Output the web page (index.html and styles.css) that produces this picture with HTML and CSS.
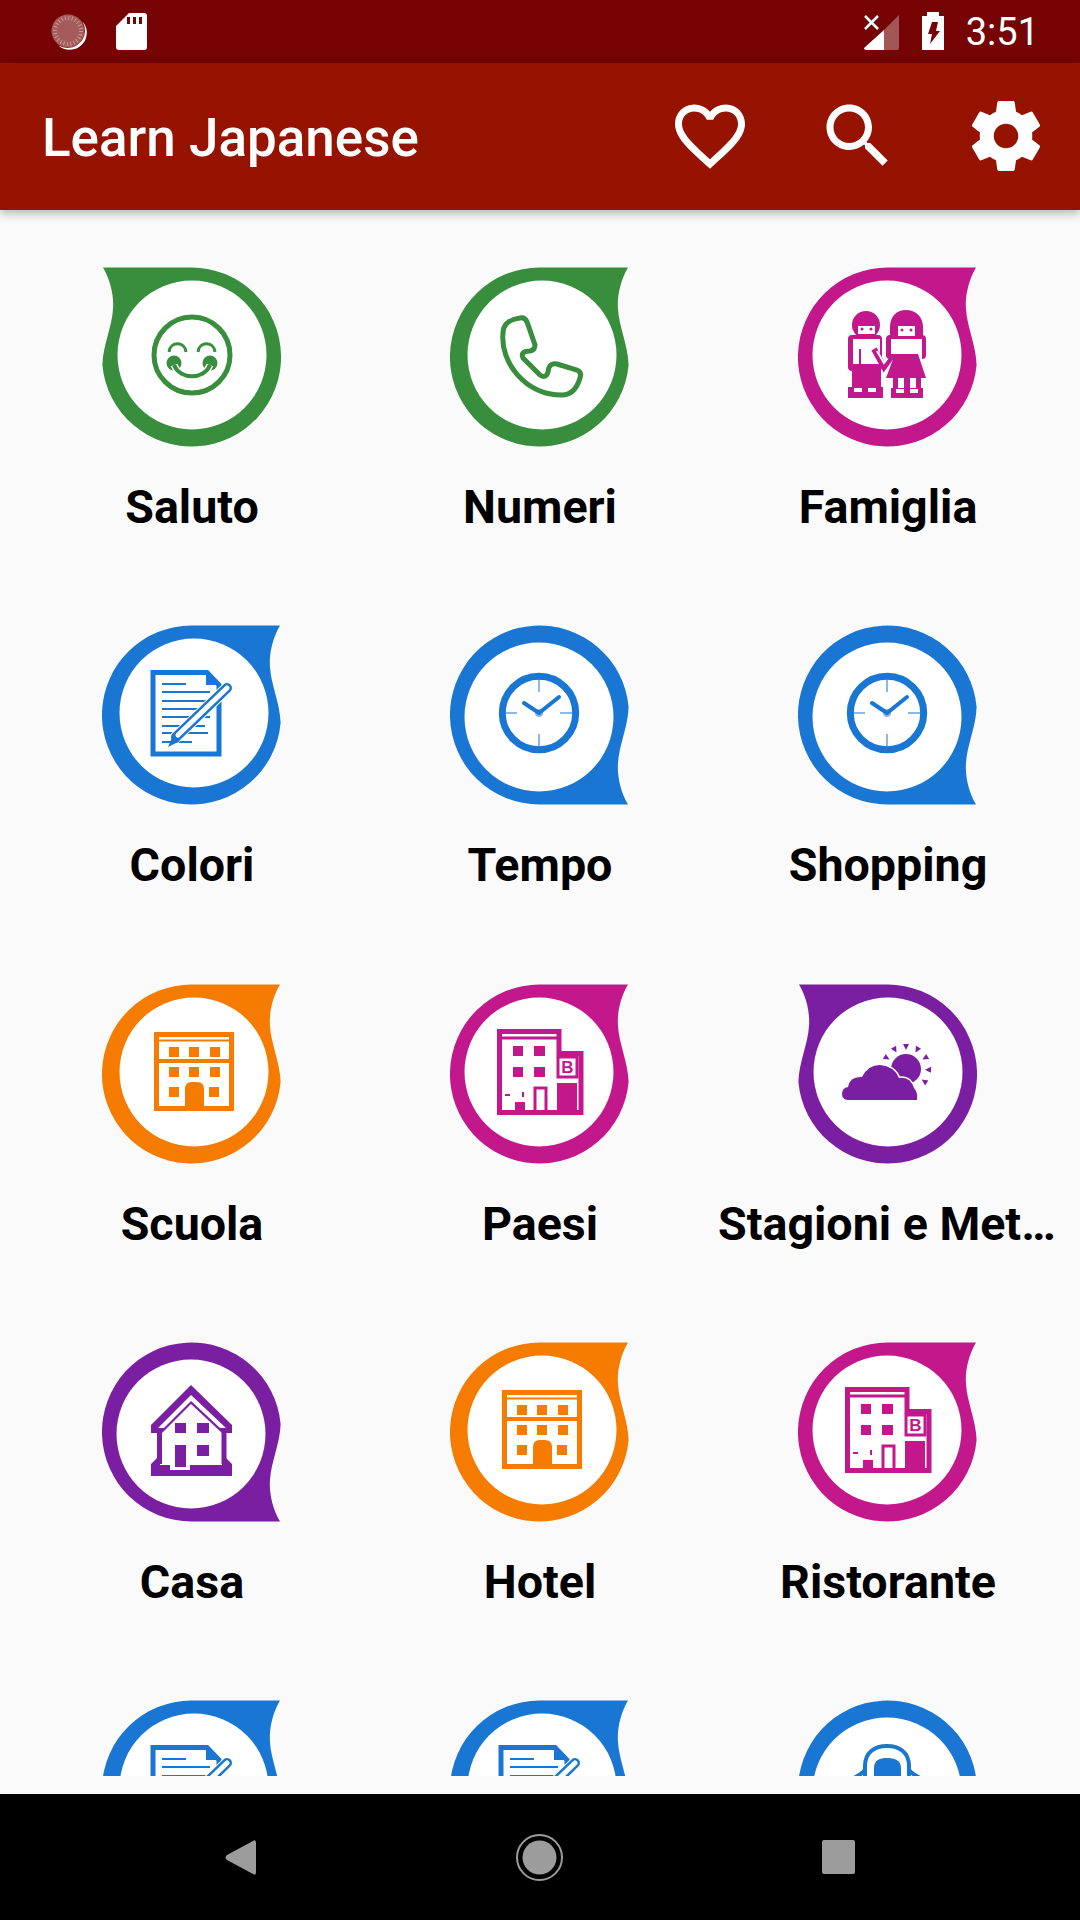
FILE: index.html
```html
<!DOCTYPE html>
<html lang="it">
<head>
  <meta charset="UTF-8">
  <meta name="viewport" content="width=device-width, initial-scale=1.0">
  <title>Learn Japanese</title>
  <link rel="stylesheet" href="styles.css">
</head>
<body>
  <!-- shared shapes, coordinates are px inside the 180px tile -->
  <svg class="sprites" aria-hidden="true">
    <symbol id="drop" viewBox="0 0 180 180">
      <path class="solid" d="M178 0.500C170 14 167 30 168 42C169 60 178 78 178.600 98A89.500 89.500 0 1 1 89.500 0.500Z"/>
      <circle class="paper" cx="89" cy="88" r="74.500"/>
    </symbol>
    <!-- some badges have the white disc sitting a bit to the right -->
    <symbol id="drop-shifted" viewBox="0 0 180 180">
      <path class="solid" d="M178 0.500C170 14 167 30 168 42C169 60 178 78 178.600 98A89.500 89.500 0 1 1 89.500 0.500Z"/>
      <circle class="paper" cx="92" cy="88" r="74.500"/>
    </symbol>

    <symbol id="smile" viewBox="0 0 180 180">
      <circle class="line w5" cx="90" cy="88" r="38"/>
      <path class="line w3" d="M67 85C68 74 83 74 84 85M96 85C97 74 112 74 113 85"/>
      <circle class="solid" cx="72" cy="96" r="7.500"/>
      <circle class="solid" cx="108" cy="96" r="7.500"/>
      <path class="cut w7" d="M72 98C78 113 102 113 108 98"/>
      <path class="line w4" d="M72 98C78 113 102 113 108 98"/>
    </symbol>

    <symbol id="phone" viewBox="0 0 180 180">
      <path class="line w5" d="M53 66C53 56 62 52 70 51Q75 50 77 55L85 78Q85 83 80 84Q70 84 73 91L90 108Q96 112 98 105Q99 95 107 97L127 103Q132 105 130 111Q125 128 112 128C75 128 50 95 53 66Z"/>
    </symbol>

    <symbol id="family" viewBox="0 0 180 180">
      <circle class="solid" cx="68" cy="58" r="14"/>
      <rect class="paper" x="60" y="59" width="17" height="8"/>
      <circle class="solid" cx="64" cy="62" r="1.500"/>
      <circle class="solid" cx="73" cy="62" r="1.500"/>
      <rect class="solid" x="50" y="68" width="34" height="36" rx="4"/>
      <path class="paper" d="M55 72H82V98H63V82H61V99H55Z"/>
      <rect class="solid" x="54" y="97" width="29" height="25"/>
      <rect class="solid" x="50" y="120" width="35" height="11"/>
      <rect class="paper" x="56" y="121" width="8" height="4"/>
      <rect class="paper" x="70" y="121" width="8" height="4"/>
      <path class="line w6" d="M76 82L86 100L99 82"/>
      <path class="cut w2" d="M79 84L86 96L96 83"/>
      <path class="solid" d="M108 43C98 43 92 50 92 60V80H125V60C125 50 118 43 108 43Z"/>
      <rect class="solid" x="88" y="68" width="40" height="24" rx="4"/>
      <rect class="paper" x="100" y="59" width="17" height="10"/>
      <circle class="solid" cx="104" cy="63" r="1.500"/>
      <circle class="solid" cx="113" cy="63" r="1.500"/>
      <rect class="paper" x="93" y="72" width="31" height="15"/>
      <rect class="paper" x="118" y="84" width="6" height="14"/>
      <path class="solid" d="M97 87H120L128 111H88Z"/>
      <rect class="paper" x="100" y="111" width="6" height="10"/>
      <rect class="paper" x="112" y="111" width="6" height="10"/>
      <rect class="solid" x="95" y="109" width="5" height="14"/>
      <rect class="solid" x="106" y="109" width="6" height="14"/>
      <rect class="solid" x="118" y="109" width="5" height="14"/>
      <rect class="solid" x="93" y="121" width="32" height="10"/>
      <rect class="paper" x="98" y="122" width="8" height="4"/>
      <rect class="paper" x="112" y="122" width="8" height="4"/>
    </symbol>

    <symbol id="notes" viewBox="0 0 180 180">
      <path class="line w5" d="M51 47.500H105L117 60V129H51Z"/>
      <path class="solid" d="M104 45L119 60H104Z"/>
      <path class="line w2" d="M60 59H84M60 67H108M60 76H108M60 84H108M60 92H108M60 101H103M60 108H106M60 117H90"/>
      <path class="cut w12" d="M72 114L124 64"/>
      <path class="line w10 round" d="M74 112L125 63"/>
      <path class="cut w5 round" d="M76 110L125 63"/>
      <path class="solid" d="M66 122L78 116L71 110Z"/>
    </symbol>

    <symbol id="clock" viewBox="0 0 180 180">
      <circle class="line w7" cx="89" cy="88" r="36.700"/>
      <path class="line w2 faint" d="M89 54V67M89 109V123M54 88H67M110 88H125"/>
      <path class="line w4 round" d="M109 72L89 88L74 78"/>
      <circle class="solid faint" cx="89" cy="88" r="4"/>
    </symbol>

    <symbol id="hotel" viewBox="0 0 180 180">
      <rect class="line w5" x="54.500" y="50.500" width="75" height="74"/>
      <path class="line w2" d="M54 56.500H130"/>
      <path class="line w4" d="M54 77H130"/>
      <path class="solid" d="M67 63H77V73H67ZM87 63H97V73H87ZM108 63H118V73H108ZM67 83H77V93H67ZM87 83H97V93H87ZM108 83H118V93H108ZM67 103H77V113H67ZM107 103H117V113H107ZM83 125V105Q83 98 90 98H95Q102 98 102 105V125Z"/>
    </symbol>

    <symbol id="building" viewBox="0 0 180 180">
      <path class="line w5" d="M49.500 47.500H109V69.500H131V128.500H49.500Z"/>
      <path class="line w3" d="M52 54H108"/>
      <path class="solid" d="M63 62H73V72H63ZM84 62H95V72H84ZM63 83H73V93H63ZM84 83H95V93H84ZM64 108H74V113H72V108H64ZM65 118H75V127H65ZM55 110H60V112H55ZM107 99H127V127H107Z"/>
      <path class="line w3" d="M85 127V104H96V127"/>
      <rect class="line w3" x="108" y="73" width="19" height="20"/>
    </symbol>

    <symbol id="cloud" viewBox="0 0 180 180">
      <circle class="solid" cx="108" cy="85" r="15"/>
      <path class="solid outlined" d="M51 116Q44 116 44 110Q44 104 50 103Q52 92 64 93Q70 81 82 81Q96 82 101 94Q112 92 116 104Q120 108 119 116Z"/>
      <g class="solid">
        <path d="M108 66L105 60H111Z" transform="rotate(-60 108 85)"/>
        <path d="M108 66L105 60H111Z" transform="rotate(-30 108 85)"/>
        <path d="M108 66L105 60H111Z"/>
        <path d="M108 66L105 60H111Z" transform="rotate(30 108 85)"/>
        <path d="M108 66L105 60H111Z" transform="rotate(60 108 85)"/>
        <path d="M108 66L105 60H111Z" transform="rotate(92 108 85)"/>
        <path d="M108 66L105 60H111Z" transform="rotate(124 108 85)"/>
      </g>
    </symbol>

    <symbol id="house" viewBox="0 0 180 180">
      <path class="solid" d="M89 43L130 83V91H49V83Z"/>
      <path class="paper" d="M56 86L89 53L124 86L118 86L89 59L62 86Z"/>
      <path class="paper" d="M60 91L89 62L120 91V122H60Z"/>
      <path class="line w5" d="M57.500 90V122M122 90V122"/>
      <path class="solid" d="M73 81H84V91H73ZM95 81H107V91H95ZM73 103H84V125H73ZM95 103H107V114H95ZM49 134V122L55 116H58V123H68V128H88V123H120V116H124L130 122V134Z"/>
    </symbol>

    <symbol id="dome" viewBox="0 0 180 180">
      <path class="line w4" d="M67 76V66C67 52 77 46 89 46C101 46 111 52 111 66V76"/>
      <path class="solid" d="M76 84V68C76 60 82 58 89 58C96 58 103 60 103 68V84Z"/>
      <path class="line w4" d="M56 78C60 76 64 74 67 70M122 78C118 76 114 74 111 70"/>
    </symbol>
  </svg>

  <div class="screen">
    <div class="status-bar">
      <svg class="spinner" viewBox="0 0 40 40">
        <circle class="spinner-disc" cx="19" cy="19" r="16.500"/>
        <circle class="spinner-ticks" cx="19" cy="19" r="13"/>
        <path class="spinner-moon" d="M33.500 9.500A17.500 17.500 0 0 1 9.500 33.500A17 17 0 0 0 33.500 9.500Z"/>
      </svg>
      <svg class="sd-card" viewBox="0 0 31 37">
        <path class="status-white" fill-rule="evenodd" d="M13 0H28Q31 0 31 3V34Q31 37 28 37H3Q0 37 0 34V13ZM11 4V11H14V4ZM17 4V11H20V4ZM23 4V11H26V4Z"/>
      </svg>
      <span class="status-gap"></span>
      <svg class="signal" viewBox="0 0 35 35">
        <path class="status-dim" d="M20 35V15L35 0V33Q35 35 33 35Z"/>
        <path class="status-white" d="M20 15V35H2Q0 35 0 33Z"/>
        <path class="signal-x" d="M1 1L14 14M14 1L1 14"/>
      </svg>
      <svg class="battery" viewBox="0 0 22 38">
        <path class="status-white" fill-rule="evenodd" d="M5 0H17V4H22V38H0V4H5ZM10 10H16L14 19H18L8 32L10 22H6Z"/>
      </svg>
      <span class="clock-text">3:51</span>
    </div>

    <header class="toolbar">
      <h1 class="toolbar-title">Learn Japanese</h1>
      <button class="action">
        <svg class="action-icon" viewBox="0 0 24 24"><path d="M16.500 3c-1.740 0-3.410.810-4.500 2.090C10.910 3.810 9.240 3 7.500 3 4.420 3 2 5.420 2 8.500c0 3.780 3.400 6.860 8.550 11.540L12 21.350l1.450-1.320C18.600 15.360 22 12.280 22 8.500 22 5.420 19.580 3 16.500 3zm-4.400 15.550l-.1.100-.1-.100C7.140 14.240 4 11.390 4 8.500 4 6.500 5.500 5 7.500 5c1.540 0 3.040.990 3.570 2.360h1.870C13.460 5.990 14.960 5 16.500 5c2 0 3.500 1.500 3.500 3.500 0 2.890-3.140 5.740-7.900 10.050z"/></svg>
      </button>
      <button class="action">
        <svg class="action-icon" viewBox="0 0 24 24"><path d="M15.500 14h-.79l-.28-.27C15.410 12.590 16 11.110 16 9.500 16 5.910 13.090 3 9.500 3S3 5.910 3 9.500 5.910 16 9.500 16c1.610 0 3.090-.59 4.230-1.570l.27.280v.79l5 4.990L20.490 19l-4.990-5zm-6 0C7.010 14 5 11.990 5 9.500S7.010 5 9.500 5 14 7.010 14 9.500 11.990 14 9.500 14z"/></svg>
      </button>
      <button class="action">
        <svg class="action-icon" viewBox="0 0 24 24"><path d="M19.430 12.980c.04-.32.07-.64.07-.98s-.03-.66-.07-.98l2.110-1.650c.19-.15.24-.42.12-.64l-2-3.460c-.12-.22-.39-.3-.61-.22l-2.490 1c-.52-.4-1.080-.73-1.690-.98l-.38-2.650C14.460 2.180 14.250 2 14 2h-4c-.25 0-.46.18-.49.42l-.38 2.650c-.61.25-1.170.59-1.690.98l-2.490-1c-.23-.09-.49 0-.61.22l-2 3.460c-.13.22-.07.49.12.64l2.110 1.650c-.04.32-.07.65-.07.98s.03.66.07.98l-2.110 1.650c-.19.15-.24.42-.12.64l2 3.460c.12.22.39.3.61.22l2.490-1c.52.4 1.080.73 1.690.98l.38 2.650c.03.24.24.42.49.42h4c.25 0 .46-.18.49-.42l.38-2.650c.61-.25 1.170-.59 1.690-.98l2.490 1c.23.09.49 0 .61-.22l2-3.460c.12-.22.07-.49-.12-.64l-2.110-1.650zM12 15.500c-1.930 0-3.500-1.570-3.500-3.500s1.570-3.500 3.500-3.500 3.500 1.570 3.500 3.500-1.570 3.500-3.500 3.500z"/></svg>
      </button>
    </header>

    <main class="content">
      <div class="topics">
        <div class="topic">
          <svg class="badge green" viewBox="0 0 180 180"><use class="tail-left" href="#drop"/><use href="#smile"/></svg>
          <div class="topic-name">Saluto</div>
        </div>
        <div class="topic">
          <svg class="badge green" viewBox="0 0 180 180"><use href="#drop-shifted"/><use href="#phone"/></svg>
          <div class="topic-name">Numeri</div>
        </div>
        <div class="topic">
          <svg class="badge magenta" viewBox="0 0 180 180"><use href="#drop"/><use href="#family"/></svg>
          <div class="topic-name">Famiglia</div>
        </div>

        <div class="topic">
          <svg class="badge blue" viewBox="0 0 180 180"><use href="#drop-shifted"/><use href="#notes"/></svg>
          <div class="topic-name">Colori</div>
        </div>
        <div class="topic">
          <svg class="badge blue" viewBox="0 0 180 180"><use class="tail-bottom" href="#drop"/><use href="#clock"/></svg>
          <div class="topic-name">Tempo</div>
        </div>
        <div class="topic">
          <svg class="badge blue" viewBox="0 0 180 180"><use class="tail-bottom" href="#drop"/><use href="#clock"/></svg>
          <div class="topic-name">Shopping</div>
        </div>

        <div class="topic">
          <svg class="badge orange" viewBox="0 0 180 180"><use href="#drop-shifted"/><use href="#hotel"/></svg>
          <div class="topic-name">Scuola</div>
        </div>
        <div class="topic">
          <svg class="badge magenta" viewBox="0 0 180 180"><use href="#drop"/><use href="#building"/><text class="sign" x="117.500" y="89">B</text></svg>
          <div class="topic-name">Paesi</div>
        </div>
        <div class="topic">
          <svg class="badge purple" viewBox="0 0 180 180"><use class="tail-left" href="#drop"/><use href="#cloud"/></svg>
          <div class="topic-name">Stagioni e Meteo</div>
        </div>

        <div class="topic">
          <svg class="badge purple" viewBox="0 0 180 180"><use class="tail-bottom" href="#drop"/><use href="#house"/></svg>
          <div class="topic-name">Casa</div>
        </div>
        <div class="topic">
          <svg class="badge orange" viewBox="0 0 180 180"><use href="#drop-shifted"/><use href="#hotel"/></svg>
          <div class="topic-name">Hotel</div>
        </div>
        <div class="topic">
          <svg class="badge magenta" viewBox="0 0 180 180"><use href="#drop"/><use href="#building"/><text class="sign" x="117.500" y="89">B</text></svg>
          <div class="topic-name">Ristorante</div>
        </div>

        <div class="topic">
          <svg class="badge blue" viewBox="0 0 180 180"><use href="#drop-shifted"/><use href="#notes"/></svg>
        </div>
        <div class="topic">
          <svg class="badge blue" viewBox="0 0 180 180"><use href="#drop-shifted"/><use href="#notes"/></svg>
        </div>
        <div class="topic">
          <svg class="badge blue" viewBox="0 0 180 180"><use class="tail-bottom" href="#drop"/><use href="#dome"/></svg>
        </div>
      </div>
    </main>

    <nav class="nav-bar">
      <svg class="nav-back" viewBox="0 0 31 35"><path d="M28 1Q31 -1 31 3V32Q31 36 28 34L2 20Q-1 17.500 2 15Z"/></svg>
      <svg class="nav-home" viewBox="0 0 47 47"><circle class="nav-ring" cx="23.500" cy="23.500" r="22.500"/><circle cx="23.500" cy="23.500" r="17"/></svg>
      <svg class="nav-recent" viewBox="0 0 33 34"><rect width="33" height="34" rx="2"/></svg>
    </nav>
  </div>
</body>
</html>
```

FILE: styles.css
```css
body {
    margin: 0;
    font-family: Roboto, "Noto Sans", sans-serif;
    background: #000;
}
.sprites {
    display: block;
    width: 0;
    height: 0;
}
.screen {
    display: flex;
    flex-direction: column;
    width: 1080px;
    height: 1920px;
    overflow: hidden;
}

/* status bar */
.status-bar {
    display: flex;
    align-items: flex-start;
    height: 63px;
    background: #760404;
    color: #fff;
}
.status-white {
    fill: #fff;
}
.status-dim {
    fill: #fff;
    opacity: 0.33;
}
.spinner {
    width: 40px;
    height: 40px;
    margin: 12px 0 0 49px;
}
.spinner-disc {
    fill: #fff;
    opacity: 0.35;
}
.spinner-ticks {
    fill: none;
    stroke: #fff;
    stroke-width: 4;
    stroke-dasharray: 1 2.4;
    opacity: 0.4;
}
.spinner-moon {
    fill: #fff;
}
.sd-card {
    width: 31px;
    height: 37px;
    margin: 13px 0 0 27px;
}
.status-gap {
    flex: 1;
}
.signal {
    width: 35px;
    height: 35px;
    margin-top: 15px;
}
.signal-x {
    fill: none;
    stroke: #fff;
    stroke-width: 2.5;
}
.battery {
    width: 22px;
    height: 38px;
    margin: 12px 0 0 23px;
}
.clock-text {
    margin: 12px 41px 0 22px;
    font-size: 38px;
    line-height: 40px;
}

/* toolbar */
.toolbar {
    position: relative;
    z-index: 2;
    display: flex;
    align-items: center;
    height: 147px;
    background: #951300;
    box-shadow: 0 3px 10px rgba(0, 0, 0, 0.3);
}
.toolbar-title {
    flex: 1;
    margin: 2px 0 0 42px;
    color: #fff;
    font-size: 53px;
    font-weight: 500;
}
.action {
    display: flex;
    align-items: center;
    justify-content: center;
    width: 148px;
    height: 147px;
    padding: 0 0 2px;
    border: none;
    background: none;
}
.action-icon {
    width: 84px;
    height: 84px;
    fill: #fff;
}

/* topic grid */
.content {
    flex: 1;
    min-height: 0;
    display: flex;
    padding-bottom: 18px;
    background: #fafafa;
}
.topics {
    flex: 1;
    min-width: 0;
    overflow: hidden;
    display: grid;
    grid-template-columns: repeat(3, 1fr);
    grid-auto-rows: 358.25px;
    padding: 0 18px;
}
.topic {
    min-width: 0;
    padding-top: 57px;
    text-align: center;
}
.badge {
    display: block;
    width: 180px;
    height: 180px;
    margin: 0 auto;
}
.topic-name {
    margin-top: 30px;
    padding: 0 4px;
    color: #000;
    font-size: 46.6px;
    font-weight: 700;
    line-height: 60px;
    white-space: nowrap;
    overflow: hidden;
    text-overflow: ellipsis;
}

.green { color: #388e3c; }
.magenta { color: #c2188b; }
.blue { color: #1976d2; }
.orange { color: #f57c00; }
.purple { color: #7b1fa2; }

.tail-left {
    transform: scaleX(-1);
    transform-origin: 89.5px 90px;
}
.tail-bottom {
    transform: scaleY(-1);
    transform-origin: 89.5px 90px;
}

/* badge glyph parts */
.solid {
    fill: currentColor;
}
.paper {
    fill: #fff;
}
.line {
    fill: none;
    stroke: currentColor;
}
.cut {
    fill: none;
    stroke: #fff;
}
.outlined {
    stroke: #fff;
    stroke-width: 3;
    paint-order: stroke;
}
.faint {
    opacity: 0.5;
}
.round {
    stroke-linecap: round;
}
.w2 { stroke-width: 2; }
.w3 { stroke-width: 3; }
.w4 { stroke-width: 4; }
.w5 { stroke-width: 5; }
.w6 { stroke-width: 6; }
.w7 { stroke-width: 7; }
.w10 { stroke-width: 10; }
.w12 { stroke-width: 12; }
.sign {
    fill: currentColor;
    font-family: "Liberation Sans", sans-serif;
    font-size: 17px;
    font-weight: 700;
    text-anchor: middle;
}

/* navigation bar */
.nav-bar {
    position: relative;
    display: flex;
    align-items: center;
    height: 126px;
    background: #000;
}
.nav-bar svg {
    fill: #9c9c9c;
}
.nav-back {
    width: 31px;
    height: 35px;
    margin-left: 225px;
}
.nav-home {
    width: 47px;
    height: 47px;
    margin-left: 260px;
}
.nav-ring {
    fill: none;
    stroke: #9c9c9c;
    stroke-width: 2;
}
.nav-recent {
    width: 33px;
    height: 34px;
    margin-left: 259px;
}
```
